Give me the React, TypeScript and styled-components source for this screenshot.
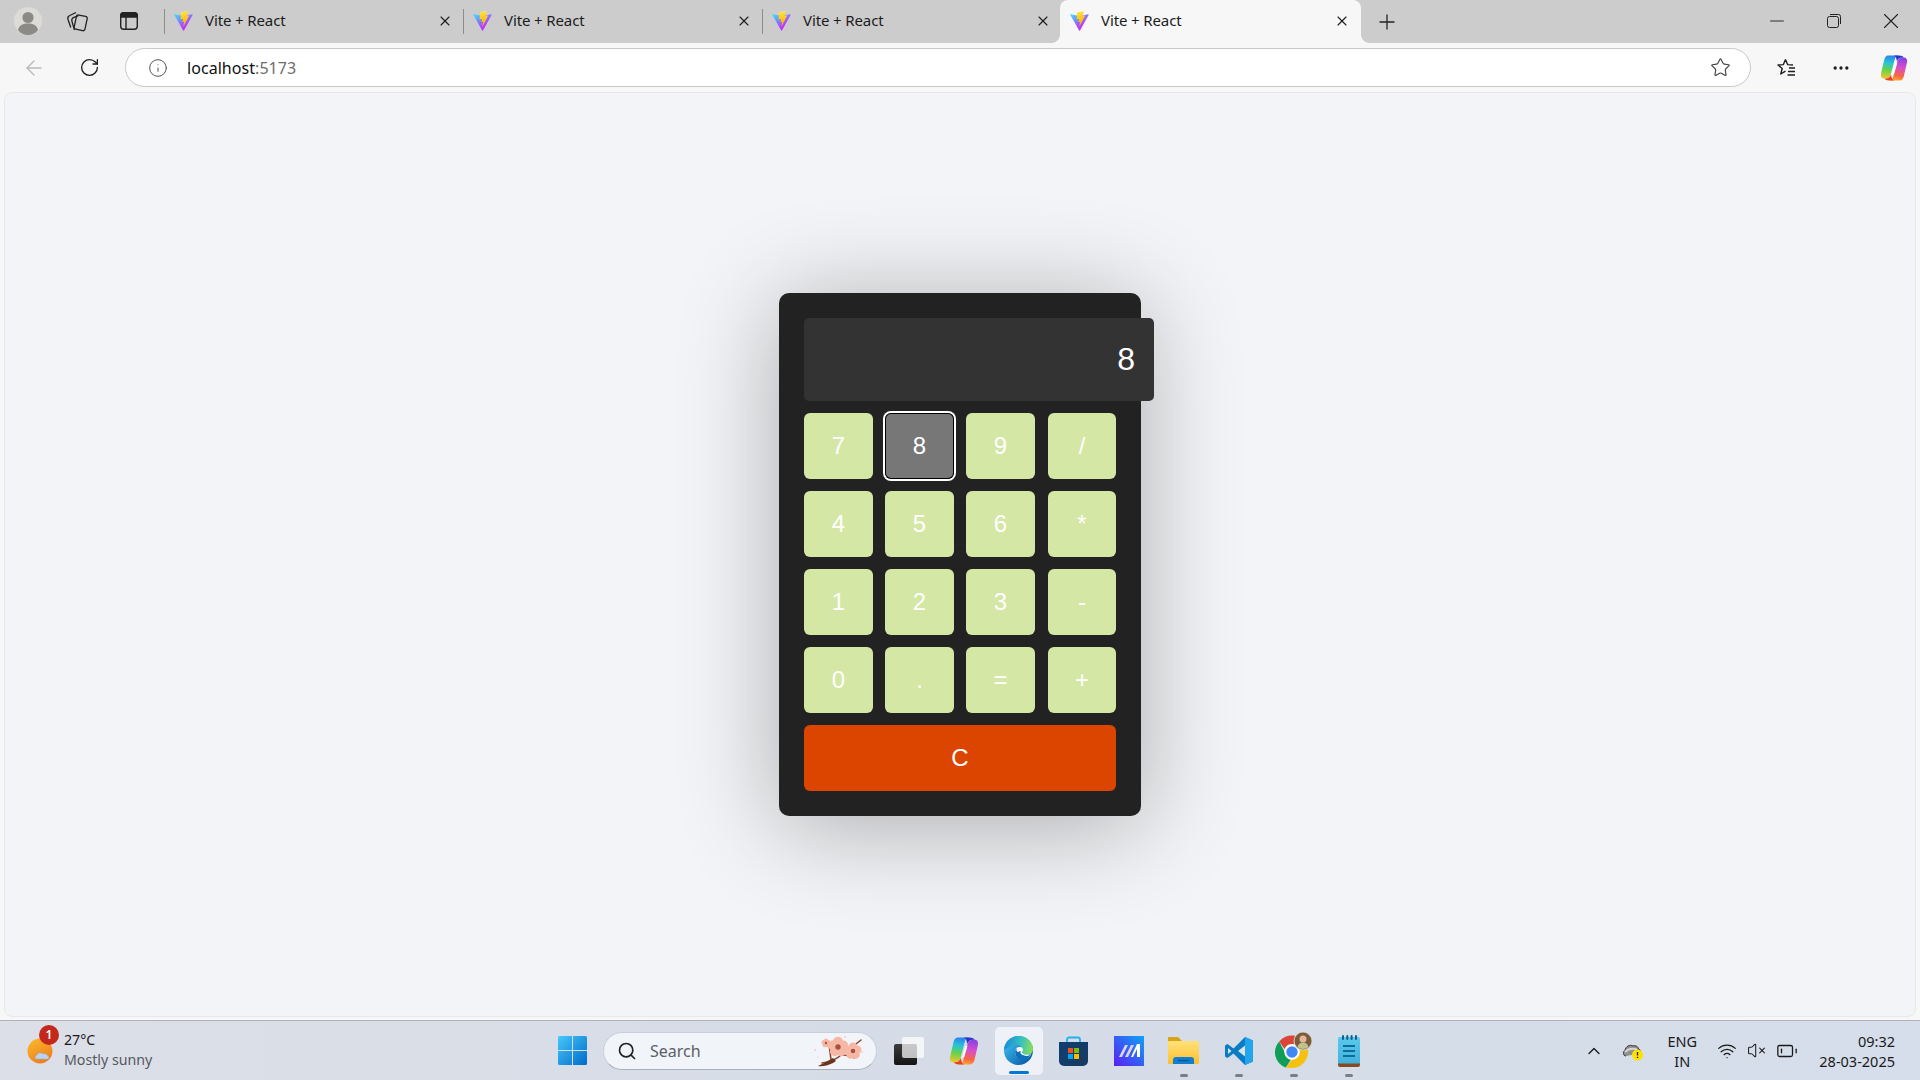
import React from 'react'
import styled, { createGlobalStyle } from 'styled-components'
import {
  ArrowLeft,
  BatteryLow,
  ChevronUp,
  Info,
  Minus,
  MoreHorizontal,
  Plus,
  RotateCw,
  Search,
  Star,
  VolumeX,
  Wifi,
  X,
} from 'lucide-react'

const UI_FONT = `'Noto Sans', 'Open Sans', sans-serif`

const GlobalStyle = createGlobalStyle`
  html, body {
    margin: 0;
    padding: 0;
    height: 100%;
    overflow: hidden;
    font-family: ${UI_FONT};
  }
  * { box-sizing: border-box; }
`

const Screen = styled.div`
  display: flex;
  flex-direction: column;
  width: 1920px;
  height: 1080px;
  background: #f7f7f7;
`

/* ---- browser tabs ---- */

const TabStrip = styled.div`
  display: flex;
  align-items: stretch;
  height: 43px;
  background: #cccccc;
  flex-shrink: 0;
`

const StripIcon = styled.div<{ $w: number }>`
  display: flex;
  align-items: center;
  justify-content: center;
  width: ${(p) => p.$w}px;
  padding-bottom: 1px;
  color: #222;
`

const TabList = styled.div`
  display: flex;
  margin-left: 4px;
`

const Tab = styled.div<{ $active?: boolean }>`
  position: relative;
  display: flex;
  align-items: center;
  width: ${(p) => (p.$active ? '301px' : '299px')};
  margin-left: ${(p) => (p.$active ? '-1px' : '0')};
  padding: 0 ${(p) => (p.$active ? '11px' : '10px')} 1px 9px;
  background: ${(p) => (p.$active ? '#f7f7f7' : 'transparent')};
  border-radius: ${(p) => (p.$active ? '8px 8px 0 0' : '0')};
  color: #1c1c1c;

  ${(p) =>
    p.$active
      ? `&::before, &::after {
      content: '';
      position: absolute;
      bottom: 0;
      width: 8px;
      height: 8px;
    }
    &::before {
      left: -8px;
      background: radial-gradient(circle at 0 0, transparent 7.5px, #f7f7f7 8px);
    }
    &::after {
      right: -8px;
      background: radial-gradient(circle at 100% 0, transparent 7.5px, #f7f7f7 8px);
    }`
      : `&::before {
      content: '';
      position: absolute;
      left: 0;
      top: 9px;
      bottom: 9px;
      width: 1px;
      background: #8d8d8d;
    }`}
`

const TabTitle = styled.span`
  flex: 1;
  margin-left: 11px;
  padding-bottom: 2px;
  font-size: 15px;
  letter-spacing: -0.12px;
  white-space: nowrap;
`

const NewTab = styled.div`
  display: flex;
  align-items: center;
  justify-content: center;
  width: 52px;
  color: #222;
`

const WindowButtons = styled.div`
  display: flex;
  margin-left: auto;
`

const WindowButton = styled.div`
  display: flex;
  align-items: center;
  justify-content: center;
  width: 57px;
  padding: 0 1px 1px 0;
  color: #222;
`

/* ---- address bar ---- */

const Toolbar = styled.div`
  display: flex;
  align-items: center;
  height: 49px;
  flex-shrink: 0;
`

const ToolButton = styled.div<{ $dim?: boolean; $w?: number }>`
  display: flex;
  align-items: center;
  justify-content: center;
  width: ${(p) => p.$w ?? 54}px;
  color: ${(p) => (p.$dim ? '#b9b9b9' : '#1f1f1f')};
`

const AddressBar = styled.div`
  display: flex;
  align-items: center;
  width: 1626px;
  height: 39px;
  margin-left: 14px;
  margin-right: 9px;
  padding: 0 19px 0 22px;
  background: #fff;
  border: 1px solid #c9c9c9;
  border-radius: 20px;
`

const Url = styled.div`
  flex: 1;
  margin-left: 19px;
  font-size: 16px;
  letter-spacing: 0.05px;
  color: #111;
`

const UrlPort = styled.span`
  color: #6d6d6d;
`

/* ---- page area with the calculator ---- */

const Page = styled.main`
  flex: 1;
  display: flex;
  align-items: center;
  justify-content: center;
  margin: 0 4px 3px;
  background: #f3f4f7;
  border: 1px solid #e8e8e8;
  border-radius: 8px;
`

const Calculator = styled.div`
  width: 362px;
  height: 523px;
  padding: 25px;
  background: #222;
  border-radius: 10px;
  box-shadow: 0 10px 100px rgba(0, 0, 0, 0.3);
`

const Display = styled.div`
  display: flex;
  align-items: center;
  justify-content: flex-end;
  width: 350px;
  height: 83px;
  margin-bottom: 12px;
  padding: 0 19px;
  background: #333;
  border-radius: 5px;
  color: #fff;
  font: 32px 'Liberation Sans', Arial, sans-serif;
`

const Keys = styled.div`
  display: grid;
  grid-template-columns: repeat(4, 69px);
  grid-auto-rows: 66px;
  gap: 12px;
`

const Key = styled.button<{ $op?: boolean; $focused?: boolean }>`
  border: none;
  border-radius: 6px;
  padding: 0;
  margin-left: ${(p) => (p.$op ? '1px' : '0')};
  background: ${(p) => (p.$focused ? '#777' : '#d4e7a4')};
  color: #fff;
  font: 24px 'Liberation Sans', Arial, sans-serif;
  ${(p) =>
    p.$focused &&
    `box-shadow: inset 0 0 0 1px #000, 0 0 0 2px #fff;`}
`

const ClearKey = styled(Key)`
  grid-column: 1 / -1;
  background: #db4500;
`

/* ---- taskbar ---- */

const Taskbar = styled.footer`
  position: relative;
  display: flex;
  align-items: center;
  height: 60px;
  flex-shrink: 0;
  background: linear-gradient(90deg, #dcdfe7 0%, #d5dce7 50%, #d5deea 100%);
  border-top: 1px solid #afb2b9;
`

const Weather = styled.div`
  display: flex;
  align-items: center;
  width: 545px;
  padding-left: 27px;
`

const WeatherIcon = styled.div`
  position: relative;
  width: 30px;
  height: 30px;
  margin-top: 2px;
`

const Badge = styled.span`
  position: absolute;
  top: -12px;
  left: 12px;
  width: 20px;
  height: 20px;
  border-radius: 50%;
  background: #c4281c;
  color: #fff;
  font-size: 12px;
  font-weight: 600;
  line-height: 20px;
  text-align: center;
`

const WeatherText = styled.div`
  margin-left: 7px;
  padding-bottom: 2px;
  font-size: 14.2px;
  line-height: 20px;
  color: #1a1a1a;
`

const WeatherNote = styled.div`
  color: #55585f;
`

const TaskIcon = styled.div<{ $active?: boolean; $dot?: 'open' | 'focus' }>`
  position: relative;
  display: flex;
  align-items: center;
  justify-content: center;
  width: 55px;
  height: 48px;
  border-radius: 5px;

  ${(p) =>
    p.$active &&
    `&::before {
      content: '';
      position: absolute;
      top: 0;
      bottom: 0;
      left: 4px;
      right: 3px;
      border-radius: 5px;
      background: #eef1f7;
    }`}

  & > svg {
    position: relative;
  }

  ${(p) =>
    p.$dot &&
    `&::after {
      content: '';
      position: absolute;
      bottom: ${p.$dot === 'focus' ? '1px' : '-2px'};
      left: 50%;
      width: ${p.$dot === 'focus' ? '20px' : '8px'};
      height: 3px;
      margin-left: ${p.$dot === 'focus' ? '-10px' : '-4px'};
      border-radius: 2px;
      background: ${p.$dot === 'focus' ? '#0078d4' : '#7b7e84'};
    }`}
`

const SearchBox = styled.div`
  display: flex;
  align-items: center;
  width: 274px;
  height: 38px;
  margin: 0 4px 0 3px;
  padding: 0 10px 0 13px;
  background: #f1f4f9;
  border: 1px solid #c9ced8;
  border-bottom-color: #a9aeb9;
  border-radius: 19px;
`

const SearchLabel = styled.span`
  flex: 1;
  margin-left: 13px;
  font-size: 16px;
  color: #5c5f66;
`

const Tray = styled.div`
  position: absolute;
  top: 0;
  right: 0;
  bottom: 0;
  display: flex;
  align-items: center;
  padding-right: 25px;
  color: #1a1a1a;
`

const TraySlot = styled.div<{ $w: number }>`
  display: flex;
  align-items: center;
  justify-content: center;
  width: ${(p) => p.$w}px;
`

const LangText = styled.div`
  width: 40px;
  font-size: 14.5px;
  line-height: 20px;
  text-align: center;
`

const Clock = styled.div`
  margin-left: 16px;
  font-size: 14.5px;
  line-height: 20px;
  text-align: right;
`

/* ---- drawn icons ---- */

const ViteLogo = () => (
  <svg width="21" height="21" viewBox="0 0 32 32" style={{ flexShrink: 0 }}>
    <defs>
      <linearGradient id="viteA" x1="6" y1="6" x2="18" y2="24" gradientUnits="userSpaceOnUse">
        <stop offset="0" stopColor="#41d1ff" />
        <stop offset="1" stopColor="#bd34fe" />
      </linearGradient>
      <linearGradient id="viteB" x1="15" y1="1" x2="19" y2="24" gradientUnits="userSpaceOnUse">
        <stop offset="0" stopColor="#ffea83" />
        <stop offset=".08" stopColor="#ffdd35" />
        <stop offset="1" stopColor="#ffa800" />
      </linearGradient>
    </defs>
    <path
      d="M29.88 6.15 16.74 29.65c-.27.49-.97.49-1.24 0L2.1 6.15c-.3-.53.15-1.16.75-1.06l13.15 2.35c.08.02.17.02.25 0l12.88-2.35c.6-.11 1.05.52.75 1.06z"
      fill="url(#viteA)"
    />
    <path
      d="M22.26.01 12.54 1.91c-.16.03-.28.17-.29.33l-.6 10.11c-.01.24.21.42.44.37l2.71-.62c.25-.06.48.16.43.42l-.81 3.94c-.05.27.2.49.46.41l1.67-.51c.26-.08.51.15.46.41l-1.28 6.19c-.08.39.44.6.65.27l.14-.22 7.93-15.83c.13-.27-.1-.57-.39-.51l-2.79.54c-.26.05-.49-.19-.41-.45l1.82-6.31c.07-.26-.15-.5-.42-.45z"
      fill="url(#viteB)"
    />
  </svg>
)

const ProfileIcon = () => (
  <svg width="28" height="28" viewBox="0 0 28 28">
    <circle cx="14" cy="14" r="14" fill="#dcdbd7" />
    <circle cx="14" cy="10.5" r="5.6" fill="#8c8a85" />
    <path d="M4 23c1-5 5-6.5 10-6.5S23 18 24 23c-2.5 3.2-6 5-10 5s-7.5-1.8-10-5z" fill="#8c8a85" />
  </svg>
)

const CollectionsIcon = () => (
  <svg width="22" height="22" viewBox="0 0 22 22" fill="none" stroke="#222" strokeWidth="1.3">
    <rect x="9.2" y="5.6" width="11" height="14.5" rx="2" transform="rotate(12 14.7 12.8)" />
    <path d="M8.5 20 6 11.5c-.6-2 .2-3.5 2-4.2L12.5 5.6" />
    <path d="M4.8 17.5 2 9.5c-.6-2 .1-3.3 1.8-4L10 2.5" />
  </svg>
)

const VerticalTabsIcon = () => (
  <svg width="20" height="20" viewBox="0 0 20 20" fill="none" stroke="#222" strokeWidth="1.4">
    <rect x="1.7" y="1.7" width="16.6" height="16.6" rx="3" />
    <path d="M1.7 4.7a3 3 0 0 1 3-3h10.600a3 3 0 0 1 3 3V6H1.700z" fill="#222" />
    <path d="M7 6v12" />
  </svg>
)

const RestoreIcon = () => (
  <svg width="14" height="14" viewBox="0 0 14 14" fill="none" stroke="#222" strokeWidth="1">
    <rect x="0.5" y="2.5" width="11" height="11" rx="2" />
    <path d="M3 .5h8.500a2 2 0 0 1 2 2V10" />
  </svg>
)

const FavoritesIcon = () => (
  <svg width="22" height="22" viewBox="0 0 22 22" fill="none" stroke="#1f1f1f" strokeWidth="1.4" strokeLinejoin="round">
    <path d="M9.5 2.5 11.6 7.6 17 8 M9.5 2.5 7.4 7.6 2 8l4.2 3.5L4.8 17l4.7-2.9" />
    <path d="M13 11h6M12 14.500h7M11.500 18h7.500" />
  </svg>
)

const CopilotIcon = ({ size }: { size: number }) => (
  <svg width={size} height={size} viewBox="0 0 28 27">
    <defs>
      <linearGradient id="copA" x1="10" y1="1" x2="6" y2="25" gradientUnits="userSpaceOnUse">
        <stop offset="0" stopColor="#2f7ff0" />
        <stop offset=".3" stopColor="#25c4d8" />
        <stop offset=".6" stopColor="#66d14c" />
        <stop offset="1" stopColor="#f8c72b" />
      </linearGradient>
      <linearGradient id="copB" x1="22" y1="3" x2="18" y2="26" gradientUnits="userSpaceOnUse">
        <stop offset="0" stopColor="#8a3fe6" />
        <stop offset=".45" stopColor="#d94fc9" />
        <stop offset=".8" stopColor="#f8663f" />
        <stop offset="1" stopColor="#f9a13a" />
      </linearGradient>
    </defs>
    <path d="M8 1h11c-2 0-3.500 1-4 3l-4 15c-.8 3-2.500 5-5 5H4C1.500 24 .5 22 1 19L4 6c.6-3 2-5 4-5z" fill="url(#copA)" />
    <path d="M20 26H9c2 0 3.500-1 4-3l4-15c.8-3 2.500-5 5-5h2c2.500 0 3.500 2 3 5l-3 13c-.6 3-2 5-4 5z" fill="url(#copB)" />
    <path d="M14 1h5c2.500 0 4 .8 5 2h-2c-2.500 0-4 1.500-5 4-.5-3-1-5-3-6z" fill="#2b36c9" />
    <path d="M14 26H9c-2.500 0-3.500-.8-4.500-2H6c2.500 0 4-1.500 5-4 .5 3 1 5 3 6z" fill="#e8421e" />
    <path d="M15.500 8.500h1.800L14 19.500h-2z" fill="#fff" />
  </svg>
)

const SunCloudIcon = () => (
  <svg width="30" height="30" viewBox="0 0 30 30">
    <defs>
      <linearGradient id="sun" x1="5" y1="3" x2="18" y2="27" gradientUnits="userSpaceOnUse">
        <stop offset="0" stopColor="#f9b52a" />
        <stop offset="1" stopColor="#ee7a1e" />
      </linearGradient>
    </defs>
    <circle cx="13" cy="14" r="12.5" fill="url(#sun)" />
    <path d="M10 22c-2 0-2.600-3-.4-3.400C10 16 14 15 16 17c2.500-.5 4 .3 4.500 2 2 .4 1.800 3-.2 3z" fill="#b9d4f2" stroke="#8fb3dc" strokeWidth=".5" />
  </svg>
)

const WindowsLogo = () => (
  <svg width="29" height="29" viewBox="0 0 29 29">
    <defs>
      <linearGradient id="win" x1="0" y1="0" x2="29" y2="29" gradientUnits="userSpaceOnUse">
        <stop offset="0" stopColor="#47c9fb" />
        <stop offset="1" stopColor="#0069c9" />
      </linearGradient>
    </defs>
    <path d="M1.5 0H14v14H0V1.500A1.500 1.500 0 0 1 1.500 0zM15 0h12.500A1.500 1.500 0 0 1 29 1.500V14H15zM0 15h14v14H1.500A1.500 1.500 0 0 1 0 27.500zM15 15h14v12.500a1.500 1.500 0 0 1-1.500 1.500H15z" fill="url(#win)" />
  </svg>
)

const PETALS = [0, 72, 144, 216, 288]

const Flower = ({ x, y, r }: { x: number; y: number; r: number }) => (
  <g transform={`translate(${x} ${y})`}>
    {PETALS.map((deg) => (
      <circle
        key={deg}
        cx={Math.sin((deg * Math.PI) / 180) * r * 0.6}
        cy={-Math.cos((deg * Math.PI) / 180) * r * 0.6}
        r={r * 0.55}
        fill="#f6b7a5"
      />
    ))}
    <circle r={r * 0.3} fill="#a8503f" />
  </g>
)

const BlossomIcon = () => (
  <svg width="54" height="32" viewBox="0 0 54 32" style={{ flexShrink: 0 }}>
    <path d="M10 28c8-1 14-3 19-8 6-4 10-7 20-15M19 24c-1-5-1-9-2-15M30 20c5 0 9 .5 12 3" fill="none" stroke="#8b4a2b" strokeWidth="1.6" strokeLinecap="round" />
    <path d="M6 31c6-3 10-5 15-8l3 3c-4 3-11 6-18 5z" fill="#6d3319" />
    <Flower x={26} y={12} r={9} />
    <Flower x={41} y={16} r={7.5} />
    <Flower x={14} y={8} r={4} />
    <circle cx="3" cy="15" r="1" fill="#f7cfc5" />
    <circle cx="50" cy="17" r="1" fill="#f7cfc5" />
    <circle cx="33" cy="2" r="1" fill="#f7cfc5" />
    <circle cx="6" cy="22" r=".8" fill="#f7cfc5" />
  </svg>
)

const TaskViewIcon = () => (
  <svg width="30" height="30" viewBox="0 0 30 30">
    <defs>
      <linearGradient id="tv" x1="0" y1="8" x2="0" y2="29" gradientUnits="userSpaceOnUse">
        <stop offset="0" stopColor="#3c3c3c" />
        <stop offset="1" stopColor="#141414" />
      </linearGradient>
    </defs>
    <rect x="0" y="8" width="23" height="21" rx="2" fill="url(#tv)" />
    <rect x="8" y="1" width="22" height="21" rx="2" fill="#fff" opacity=".72" />
  </svg>
)

const EdgeIcon = () => (
  <svg width="31" height="31" viewBox="0 0 32 32">
    <defs>
      <linearGradient id="edgeTop" x1="3" y1="8" x2="29" y2="14" gradientUnits="userSpaceOnUse">
        <stop offset="0" stopColor="#1b8fd6" />
        <stop offset=".55" stopColor="#35c1c1" />
        <stop offset="1" stopColor="#7fdc5e" />
      </linearGradient>
      <linearGradient id="edgeLow" x1="4" y1="10" x2="24" y2="30" gradientUnits="userSpaceOnUse">
        <stop offset="0" stopColor="#36b5ea" />
        <stop offset="1" stopColor="#0b5fa8" />
      </linearGradient>
    </defs>
    <circle cx="16" cy="16" r="15" fill="url(#edgeLow)" />
    <path d="M1 15C2 6 9 1 16 1c9 0 15 6.500 15 13.500 0 4-3 6.500-7 6.500-3 0-5-1-5.500-2.500 2-1.500 2-4 .5-6C17 9.500 12 9 8 11.500 5 13 3 14 1 15z" fill="url(#edgeTop)" />
    <path d="M12.500 17c0-3 2.500-5 5.500-4.500 2.500.5 3.500 3 1.500 5.500 1 1.500 3 2.500 5.500 2.500 2 0 3.500-.5 4-1-1 2.500-4 6-9 6-4.500 0-7.500-4-7.500-8.500z" fill="#fff" opacity=".95" />
    <path d="M12.500 17c0 5 3.500 10 9 9 3-.5 5.500-2.500 7-6-3 2-6 2-8.500.5-2-1.200-2.500-2.500-1.500-4-2 .5-3.500 1.500-4 .5-.6-1-.9-1-.2-3-1.200.6-1.800 1.800-1.800 3.500z" fill="#0f6fb9" />
  </svg>
)

const StoreIcon = () => (
  <svg width="29" height="30" viewBox="0 0 29 30">
    <defs>
      <linearGradient id="bag" x1="0" y1="6" x2="29" y2="30" gradientUnits="userSpaceOnUse">
        <stop offset="0" stopColor="#0d3f73" />
        <stop offset="1" stopColor="#183a5f" />
      </linearGradient>
    </defs>
    <path d="M8 7V3.500A2 2 0 0 1 10 1.500h9a2 2 0 0 1 2 2V7" fill="none" stroke="#1fb2ec" strokeWidth="1.8" />
    <path d="M0 6h29v19a5 5 0 0 1-5 5H5a5 5 0 0 1-5-5z" fill="url(#bag)" />
    <rect x="9" y="12" width="5" height="5" fill="#f25022" />
    <rect x="15" y="12" width="5" height="5" fill="#7fba00" />
    <rect x="9" y="18" width="5" height="5" fill="#00a4ef" />
    <rect x="15" y="18" width="5" height="5" fill="#ffb900" />
  </svg>
)

const MAppIcon = () => (
  <svg width="30" height="30" viewBox="0 0 30 30">
    <defs>
      <linearGradient id="mApp" x1="0" y1="30" x2="30" y2="0" gradientUnits="userSpaceOnUse">
        <stop offset="0" stopColor="#5b1df2" />
        <stop offset="1" stopColor="#0fa2f5" />
      </linearGradient>
    </defs>
    <rect width="30" height="30" fill="url(#mApp)" />
    <path d="M5 21 11 9h3L8 21zM11 21 17 9h3l-6 12z" fill="#d8d4f7" />
    <path d="M17 21 23 8h3v13h-3v-8l-4 8z" fill="#fff" />
  </svg>
)

const FolderIcon = () => (
  <svg width="31" height="27" viewBox="0 0 31 27">
    <defs>
      <linearGradient id="fold" x1="0" y1="4" x2="0" y2="27" gradientUnits="userSpaceOnUse">
        <stop offset="0" stopColor="#ffe27a" />
        <stop offset="1" stopColor="#fdbf2d" />
      </linearGradient>
    </defs>
    <path d="M1 0h9l4 4h16a1 1 0 0 1 1 1v5H0V1a1 1 0 0 1 1-1z" fill="#d9a312" />
    <rect y="4" width="31" height="23" rx="1" fill="url(#fold)" />
    <path d="M5 27v-4a3 3 0 0 1 3-3h15a3 3 0 0 1 3 3v4z" fill="#0f7dd0" />
    <path d="M10 23.500h11" stroke="#0b4f8c" strokeWidth="1.2" />
  </svg>
)

const VsCodeIcon = () => (
  <svg width="30" height="30" viewBox="0 0 30 30">
    <path d="M21 1 9.500 12.500 3.500 8 1 9.500v11L3.500 22l6-4.500L21 29l8-3.500v-21z" fill="#0a7cc4" />
    <path d="M21 1v28l8-3.500v-21z" fill="#22a5ec" />
    <path d="M4 12 7.500 15 4 18z" fill="#dbe3eb" />
    <path d="M21 9.500 14 15l7 5.500z" fill="#dbe3eb" />
  </svg>
)

const ChromeIcon = () => (
  <svg width="40" height="40" viewBox="0 0 40 40">
    <path d="M5.200 10.500A16 16 0 0 1 31.900 13H18a8 8 0 0 0-7.400 5z" fill="#db4437" />
    <path d="M5.200 10.500 12.300 24.500a8 8 0 0 0 4.500 4.300L11.800 36.500A16 16 0 0 1 5.200 10.500z" fill="#0f9d58" />
    <path d="M31.900 13A16 16 0 0 1 18 37l-6.200-.5 6.500-8A8 8 0 0 0 24.500 16z" fill="#f4c20d" />
    <circle cx="18" cy="21" r="6.700" fill="#3f87f5" stroke="#fff" strokeWidth="2" />
    <circle cx="29" cy="10" r="9.500" fill="#d8d0c6" />
    <circle cx="29" cy="10" r="8.500" fill="#7a5b3c" />
    <circle cx="29" cy="8" r="3.500" fill="#e2b799" />
    <path d="M23.500 16c1-3.500 3-4.500 5.500-4.500s4.500 1 5.500 4.500a8.500 8.500 0 0 1-11 0z" fill="#c0c28a" />
  </svg>
)

const NotepadIcon = () => (
  <svg width="24" height="32" viewBox="0 0 24 32">
    <defs>
      <linearGradient id="pad" x1="0" y1="0" x2="0" y2="30" gradientUnits="userSpaceOnUse">
        <stop offset="0" stopColor="#5ccbed" />
        <stop offset="1" stopColor="#3fb0dc" />
      </linearGradient>
    </defs>
    <rect y="2" width="22" height="28" rx="1.5" x="1" fill="url(#pad)" />
    <path d="M1 28.500h22V30a2 2 0 0 1-2 2H3a2 2 0 0 1-2-2z" fill="#8a4a20" />
    <path d="M6 1v3M10.300 1v3M14.600 1v3M19 1v3" stroke="#0f5f8e" strokeWidth="2" strokeLinecap="round" />
    <path d="M6 11h12M6 16h12M6 21h12" stroke="#0f6c9a" strokeWidth="1.8" />
  </svg>
)

const CloudWarningIcon = () => (
  <svg width="22" height="20" viewBox="0 0 22 20">
    <path d="M4 15C1 15 .5 10.500 3 9.500 3.500 5.500 8 3 11 5c2-1 5 0 5.500 3 2 .5 2.500 3 1.500 4.500" fill="#8f8f8f" stroke="#333" strokeWidth="1" />
    <path d="M3 11c3-3 7-4 12-2.500" fill="none" stroke="#d5d5d5" strokeWidth="2" />
    <circle cx="15.500" cy="14" r="5.500" fill="#ffe100" />
    <path d="M15.500 11v3.500M15.500 15.800v1.200" stroke="#222" strokeWidth="1.3" />
  </svg>
)

/* ---- data ---- */

const TABS = [
  { id: 'tab1', active: false },
  { id: 'tab2', active: false },
  { id: 'tab3', active: false },
  { id: 'tab4', active: true },
]

const KEYS = ['7', '8', '9', '/', '4', '5', '6', '*', '1', '2', '3', '-', '0', '.', '=', '+']

const App = () => {
  return (
    <Screen>
      <GlobalStyle />
      <TabStrip>
        <StripIcon $w={56}><ProfileIcon /></StripIcon>
        <StripIcon $w={42}><CollectionsIcon /></StripIcon>
        <StripIcon $w={62}><VerticalTabsIcon /></StripIcon>
        <TabList>
          {TABS.map((tab) => (
            <Tab key={tab.id} $active={tab.active}>
              <ViteLogo />
              <TabTitle>Vite + React</TabTitle>
              <X size={16} strokeWidth={1.6} />
            </Tab>
          ))}
        </TabList>
        <NewTab><Plus size={24} strokeWidth={1.3} /></NewTab>
        <WindowButtons>
          <WindowButton><Minus size={22} strokeWidth={1} /></WindowButton>
          <WindowButton><RestoreIcon /></WindowButton>
          <WindowButton><X size={26} strokeWidth={1} /></WindowButton>
        </WindowButtons>
      </TabStrip>

      <Toolbar>
        <ToolButton $dim $w={68}><ArrowLeft size={24} strokeWidth={1.3} /></ToolButton>
        <ToolButton $w={43}><RotateCw size={21} strokeWidth={1.5} /></ToolButton>
        <AddressBar>
          <Info size={20} strokeWidth={1.2} color="#555" />
          <Url>
            localhost<UrlPort>:5173</UrlPort>
          </Url>
          <Star size={21} strokeWidth={1.3} color="#444" />
        </AddressBar>
        <ToolButton $w={54}><FavoritesIcon /></ToolButton>
        <ToolButton $w={54}><MoreHorizontal size={20} strokeWidth={2} /></ToolButton>
        <ToolButton $w={52}><CopilotIcon size={28} /></ToolButton>
      </Toolbar>

      <Page>
        <Calculator>
          <Display>8</Display>
          <Keys>
            {KEYS.map((k, i) => (
              <Key key={k} $op={i % 4 === 3} $focused={k === '8'}>
                {k}
              </Key>
            ))}
            <ClearKey>C</ClearKey>
          </Keys>
        </Calculator>
      </Page>

      <Taskbar>
        <Weather>
          <WeatherIcon>
            <SunCloudIcon />
            <Badge>1</Badge>
          </WeatherIcon>
          <WeatherText>
            27°C
            <WeatherNote>Mostly sunny</WeatherNote>
          </WeatherText>
        </Weather>
        <TaskIcon><WindowsLogo /></TaskIcon>
        <SearchBox>
          <Search size={20} strokeWidth={2} color="#222" />
          <SearchLabel>Search</SearchLabel>
          <BlossomIcon />
        </SearchBox>
        <TaskIcon><TaskViewIcon /></TaskIcon>
        <TaskIcon><CopilotIcon size={30} /></TaskIcon>
        <TaskIcon $active $dot="focus"><EdgeIcon /></TaskIcon>
        <TaskIcon><StoreIcon /></TaskIcon>
        <TaskIcon><MAppIcon /></TaskIcon>
        <TaskIcon $dot="open"><FolderIcon /></TaskIcon>
        <TaskIcon $dot="open"><VsCodeIcon /></TaskIcon>
        <TaskIcon $dot="open"><ChromeIcon /></TaskIcon>
        <TaskIcon $dot="open"><NotepadIcon /></TaskIcon>
        <Tray>
          <TraySlot $w={39}><ChevronUp size={20} strokeWidth={1.6} /></TraySlot>
          <TraySlot $w={39}><CloudWarningIcon /></TraySlot>
          <TraySlot $w={60}><LangText>ENG<br />IN</LangText></TraySlot>
          <TraySlot $w={30}><Wifi size={20} strokeWidth={1.5} /></TraySlot>
          <TraySlot $w={28}><VolumeX size={19} strokeWidth={1.3} /></TraySlot>
          <TraySlot $w={33}><BatteryLow size={22} strokeWidth={1.4} /></TraySlot>
          <Clock>09:32<br />28-03-2025</Clock>
        </Tray>
      </Taskbar>
    </Screen>
  )
}

export default App
